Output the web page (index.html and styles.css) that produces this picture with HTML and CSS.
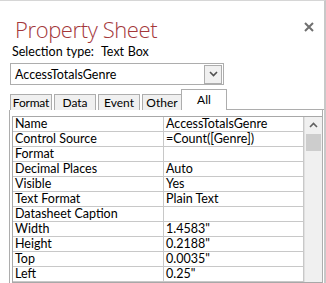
FILE: index.html
```html
<!DOCTYPE html>
<html lang="en">
<head>
    <meta charset="UTF-8">
    <title>Property Sheet</title>
    <link rel="stylesheet" href="styles.css">
</head>
<body>

<div class="sheet">
    <div class="head">
        <h1 class="title">Property Sheet</h1>
        <svg class="close" width="10" height="10" viewBox="0 0 10 10">
            <path d="M1 1 L9 9 M9 1 L1 9" stroke="#707070" stroke-width="2"/>
        </svg>
    </div>
    <div class="seltype">Selection type:&nbsp; Text Box</div>

    <div class="combo">
        <span class="combo-text">AccessTotalsGenre</span>
        <span class="combo-btn">
            <svg width="9" height="6" viewBox="0 0 9 6"><path d="M1 1 L4.5 4.5 L8 1" fill="none" stroke="#505050" stroke-width="1.6"/></svg>
        </span>
    </div>

    <div class="tabs">
        <span class="tab tab-format">Format</span>
        <span class="tab tab-data">Data</span>
        <span class="tab tab-event">Event</span>
        <span class="tab tab-other">Other</span>
        <span class="tab active">All</span>
        <span class="tab-fill"></span>
    </div>

    <div class="panel">
        <div class="grid">
            <table class="props">
                <tr><td>Name</td><td>AccessTotalsGenre</td></tr>
                <tr><td>Control Source</td><td>=Count([Genre])</td></tr>
                <tr><td>Format</td><td></td></tr>
                <tr><td>Decimal Places</td><td>Auto</td></tr>
                <tr><td>Visible</td><td>Yes</td></tr>
                <tr><td>Text Format</td><td>Plain Text</td></tr>
                <tr><td>Datasheet Caption</td><td></td></tr>
                <tr><td>Width</td><td>1.4583"</td></tr>
                <tr><td>Height</td><td>0.2188"</td></tr>
                <tr><td>Top</td><td>0.0035"</td></tr>
                <tr><td>Left</td><td>0.25"</td></tr>
            </table>
            <div class="scroll">
                <div class="arrow">
                    <svg width="9" height="6" viewBox="0 0 9 6"><path d="M1 5 L4.5 1.5 L8 5" fill="none" stroke="#606060" stroke-width="1.6"/></svg>
                </div>
                <div class="thumb"></div>
            </div>
        </div>
    </div>
</div>

</body>
</html>
```

FILE: styles.css
```css
body { margin: 0; background: #fff; font-family: Lato, "Open Sans", sans-serif; font-size: 12.5px; color: #000; overflow: hidden; }
.sheet { height: 283px; border-top: 1px solid #d6d6d6; border-right: 2px solid #c8c8c8; box-sizing: border-box; width: 326px; padding-left: 9px; overflow: hidden; }
.head { display: flex; align-items: center; justify-content: space-between; padding: 13px 10px 0 6px; height: 30px; }
.title { margin: 0; font-family: "Open Sans", sans-serif; font-weight: 300; font-size: 22px; color: #a4373a; letter-spacing: -0.4px; line-height: 30px; }
.close { margin-top: -5px; }
.seltype { padding-left: 3px; line-height: 16px; margin-top: 0; word-spacing: 0.5px; }
.combo { display: flex; align-items: center; justify-content: space-between; width: 214px; height: 22px; margin-top: 3px; margin-left: 1px; border: 1px solid #adadad; box-sizing: border-box; padding: 0 1px 0 4px; }
.combo-btn { display: flex; align-items: center; justify-content: center; width: 16px; height: 17px; background: #f0f0f0; border: 1px solid #adadad; }
.tabs { display: flex; align-items: flex-end; gap: 2px; margin-top: 4px; height: 21px; font-size: 12px; }
.tab { box-sizing: border-box; height: 16px; line-height: 15px; text-align: center; border: 1px solid #adadad; border-bottom: none; background: #f0f0f0; white-space: nowrap; }
.tab-format { width: 42px; margin-left: 1px; letter-spacing: -0.2px; }
.tab-data { width: 42px; }
.tab-event { width: 42px; }
.tab-other { width: 40px; }
.tab.active { background: #fff; height: 21px; width: 46px; margin-left: -3px; line-height: 20px; }
.tab-fill { flex: 1; border-bottom: 1px solid #adadad; margin-left: -2px; }
.panel { border: 1px solid #adadad; border-top: none; height: 200px; padding: 6px 0 0 2px; margin-right: 1px; }
.grid { display: flex; border: 1px solid #a8a8a8; border-right: none; }
.props { border-collapse: collapse; width: 292px; }
.props td { border: 1px solid #c8c8c8; height: 14px; padding: 0 2px; line-height: 14px; white-space: nowrap; }
.props td:first-child { width: 146px; border-left: none; }
.props tr:first-child td { border-top: none; }
.scroll { width: 17px; background: #f0f0f0; border-left: 1px solid #e0e0e0; }
.arrow { height: 16px; display: flex; align-items: center; justify-content: center; }
.thumb { height: 17px; background: #cdcdcd; margin: 1px 1px 0 1px; }
```
